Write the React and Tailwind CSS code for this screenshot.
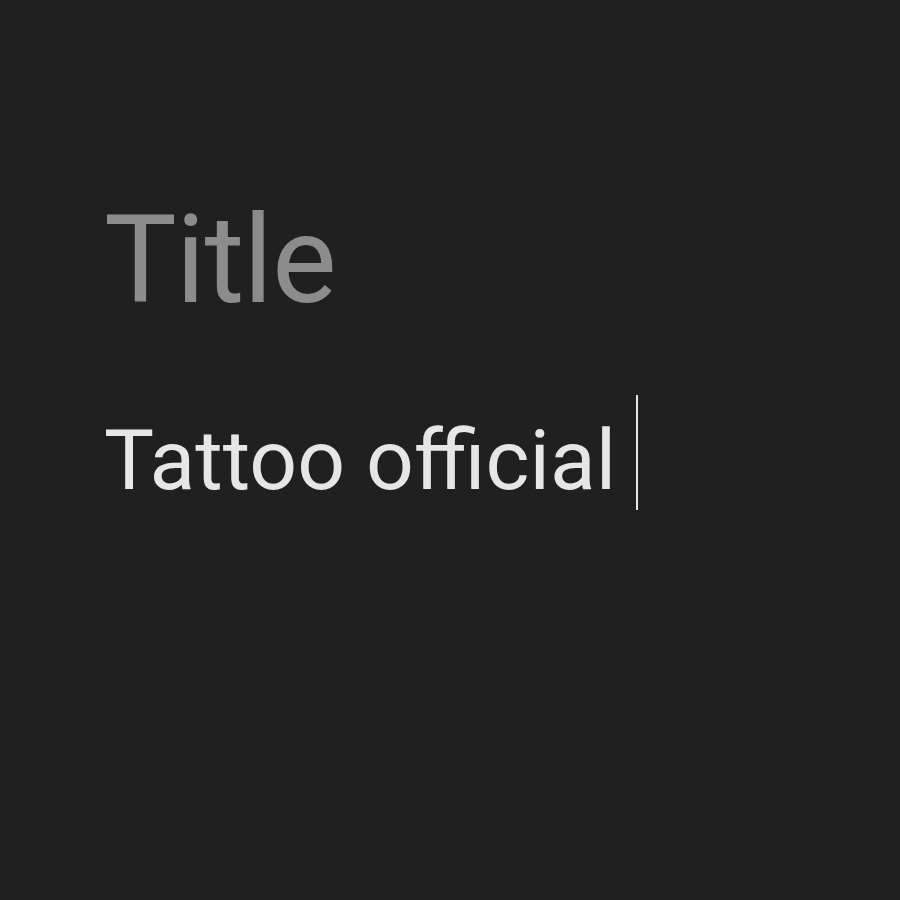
import React from "react";

export default function App() {
  return (
    <div className="w-[900px] h-[900px] bg-[#202020] overflow-hidden font-['Roboto',sans-serif]">
      <div className="pl-[104px] pt-[200px] flex flex-col">
        {/* placeholder title */}
        <div className="text-[122px] leading-[122px] text-[#8c8c8c] tracking-[-1px]">Title</div>
        {/* body with caret */}
        <div className="mt-[82px] flex items-start h-[100px]">
          <span className="mt-[7px] text-[84px] leading-[100px] text-[#e6e6e6]">Tattoo official</span>
          <span className="ml-[20px] -mt-[9px] w-[2px] h-[115px] shrink-0 bg-[#e6e6e6]" />
        </div>
      </div>
    </div>
  );
}
